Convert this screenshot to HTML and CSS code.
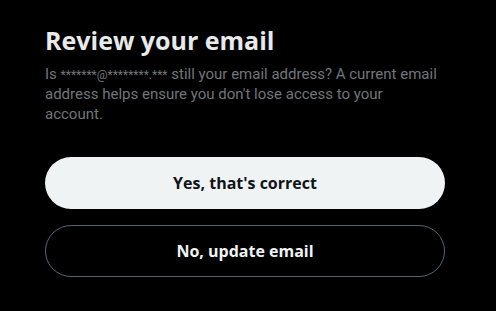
FILE: index.html
```html
<!DOCTYPE html>
<html>
<head>
<meta charset="utf-8">
<link rel="stylesheet" href="styles.css">
</head>
<body>
<div class="dialog">
  <div class="header">
    <h1 class="title">Review your email</h1>
    <p class="desc">Is <span class="mask">*******@********.***</span> still your email address? A current email address helps ensure you don't lose access to your account.</p>
  </div>
  <div class="actions">
    <button class="btn btn-primary">Yes, that's correct</button>
    <button class="btn btn-outline">No, update email</button>
  </div>
</div>
</body>
</html>
```
FILE: styles.css
```css
html, body {
  margin: 0;
  padding: 0;
  background: #000;
}
.dialog {
  width: 400px;
  padding: 26px 51px 0 45px;
  font-family: "Open Sans", "Noto Sans", sans-serif;
}
.title {
  margin: 0;
  font-size: 25px;
  line-height: 28px;
  font-weight: 700;
  color: #e7e9ea;
}
.desc {
  max-width: 395px;
  margin: 10px 0 0;
  font-family: Roboto, "Open Sans", sans-serif;
  font-size: 15px;
  line-height: 20px;
  color: #71767b;
}
.mask {
  font-size: 12px;
  line-height: 0;
}
.actions {
  display: flex;
  flex-direction: column;
  gap: 16px;
  margin-top: 33px;
}
.btn {
  height: 52px;
  border-radius: 9999px;
  font-family: inherit;
  font-size: 16px;
  font-weight: 700;
  cursor: pointer;
}
.btn-primary {
  background: #eff3f4;
  color: #0f1419;
  border: none;
}
.btn-outline {
  background: transparent;
  color: #eff3f4;
  border: 1px solid #536471;
}
```
